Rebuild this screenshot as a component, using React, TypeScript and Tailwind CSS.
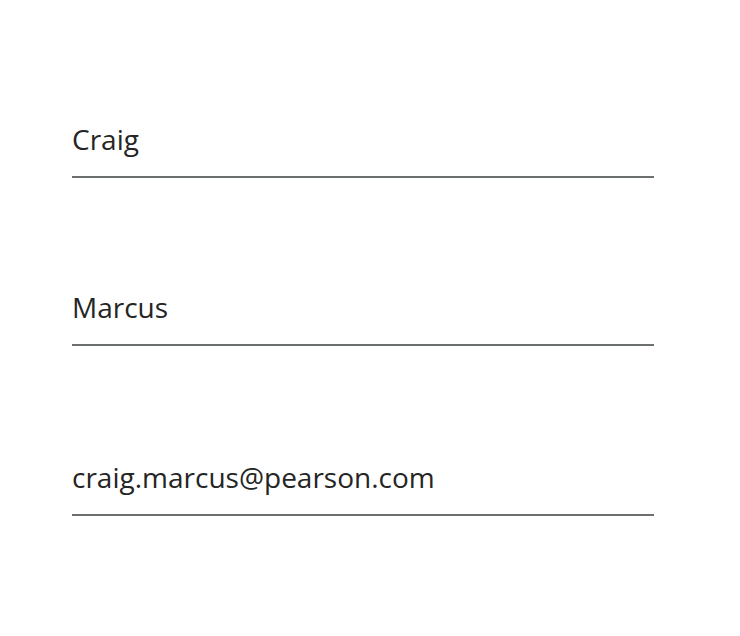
export default function App() {
  const fields = [
    { id: "first", value: "Craig", gap: "" },
    { id: "last", value: "Marcus", gap: "mt-[110px]" },
    { id: "email", value: "craig.marcus@pearson.com", gap: "mt-[112px]" },
  ];

  return (
    <main
      className="min-h-[636px] w-[740px] bg-white pt-[120px]"
      style={{ fontFamily: '"Open Sans", sans-serif' }}
    >
      <div className="flex flex-col pl-[72px]">
        {fields.map((f) => (
          <div
            key={f.id}
            className={`${f.gap} w-[582px] border-b-2 border-[#6b6f6f] pb-[18px]`}
          >
            <div className="text-[28px] leading-[38px] text-[#252525]">{f.value}</div>
          </div>
        ))}
      </div>
    </main>
  );
}
